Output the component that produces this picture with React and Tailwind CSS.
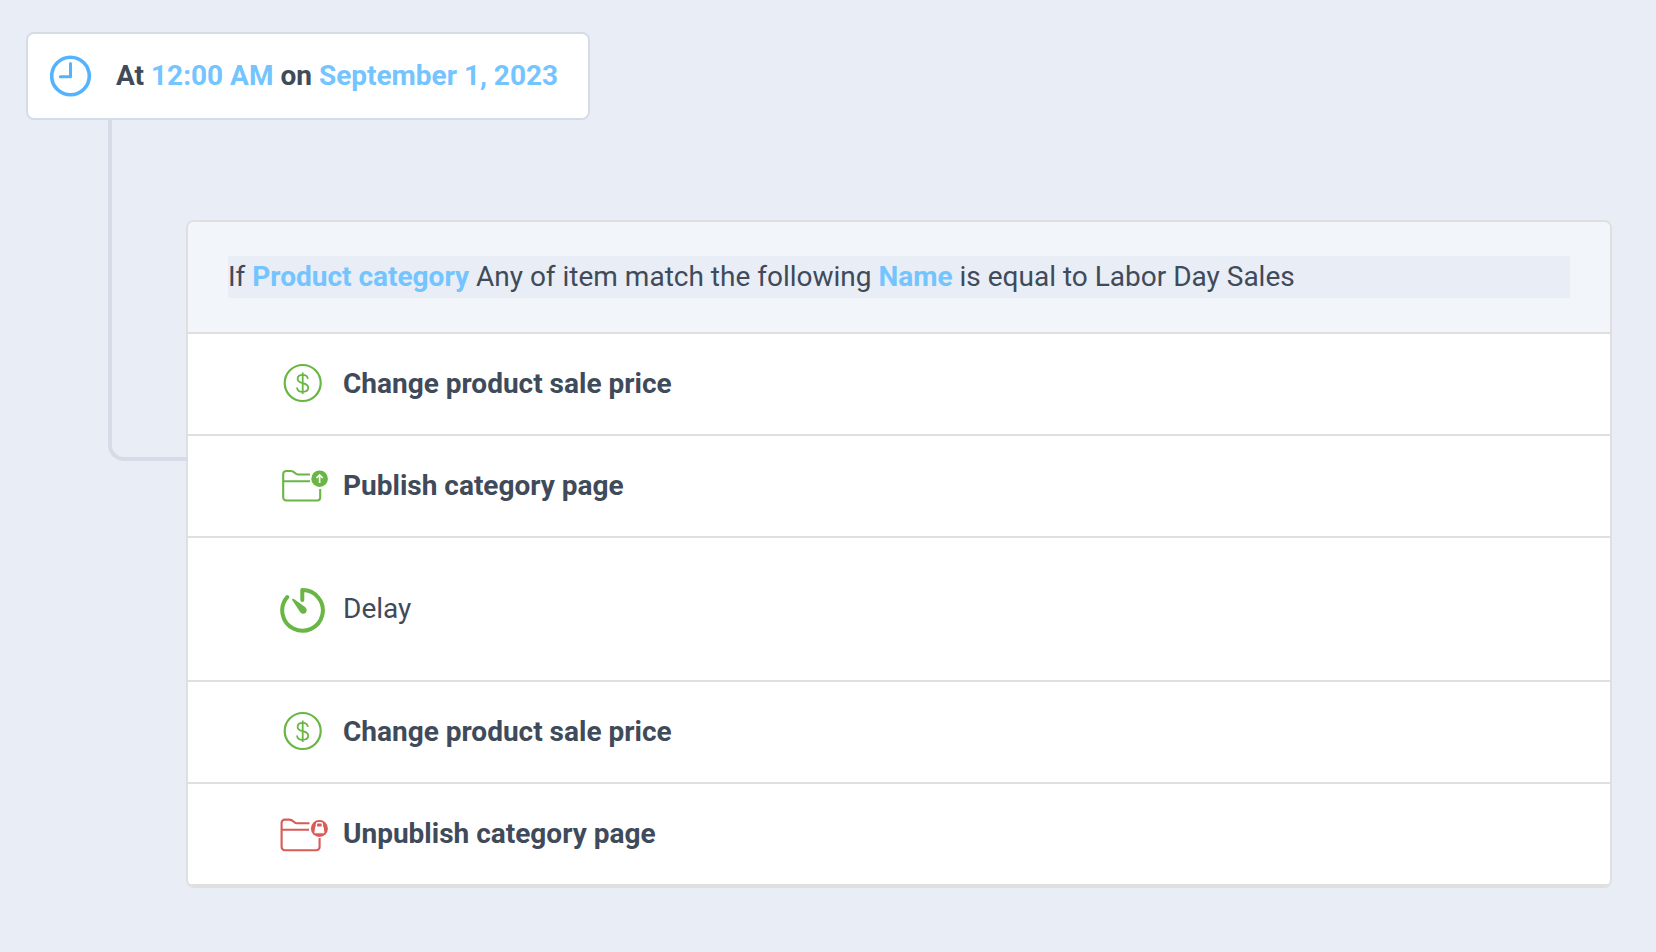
const actions = [
  { id: 1, label: 'Change product sale price', icon: DollarIcon },
  { id: 2, label: 'Publish category page', icon: PublishIcon },
  { id: 3, label: 'Delay', icon: DelayIcon, isDelay: true },
  { id: 4, label: 'Change product sale price', icon: DollarIcon },
  { id: 5, label: 'Unpublish category page', icon: UnpublishIcon },
];

function ClockIcon() {
  return (
    <svg className="size-[42px] shrink-0" viewBox="0 0 42 42" fill="none" stroke="#54b3ff" aria-hidden="true">
      <circle cx="20.5" cy="21" r="18.8" strokeWidth="3.6" />
      <path d="M20.5 8.5V21.8H10.3" strokeWidth="3" strokeLinecap="round" strokeLinejoin="round" />
    </svg>
  );
}

function DollarIcon() {
  return (
    <svg className="size-12 shrink-0" viewBox="0 0 48 48" fill="none" stroke="#69b645" aria-hidden="true">
      <circle cx="22.7" cy="23" r="18" strokeWidth="2.2" />
      <path
        d="M27.9 18.9c-.3-2.500-2.300-4-5.200-4-3.100 0-5.100 1.600-5.100 4 0 2.500 1.900 3.400 5.100 4.200 3.500.8 5.500 1.800 5.500 4.500 0 2.600-2.200 4.300-5.500 4.300-3.400 0-5.500-1.600-5.700-4.400M22.700 12.500v21.500"
        strokeWidth="1.8"
      />
    </svg>
  );
}

function PublishIcon() {
  return (
    <svg className="size-12 shrink-0" viewBox="0 0 48 48" fill="none" stroke="#69b645" aria-hidden="true">
      <path
        d="M30 12.5H17.8c-2.600 0-3.200-3.500-6.800-3.500H6.3A3 3 0 0 0 3.200 12v23.500a3 3 0 0 0 3 3h31a3 3 0 0 0 3-3V27M3.200 19.200H30"
        strokeWidth="2.1"
      />
      <circle cx="39.6" cy="16.7" r="8.3" fill="#69b645" stroke="none" />
      <path d="M39.6 21v-7.800M36.500 16l3.100-3.100 3.100 3.100" stroke="white" strokeWidth="1.7" />
    </svg>
  );
}

function DelayIcon() {
  return (
    <svg className="size-12 shrink-0" viewBox="0 0 48 48" fill="none" aria-hidden="true">
      <path
        d="M22.3 15V5.100A20.300 20.300 0 1 1 7.200 12.100"
        stroke="#69b645"
        strokeWidth="4"
        strokeLinecap="round"
        strokeLinejoin="round"
      />
      <path
        d="M12.3 15.200c-.7-.9.3-2 1.300-1.400l11.500 8.300c2.100 1.800 2 4.200.7 5.600-1.600 1.600-4.300 1.300-5.700-.8z"
        fill="#69b645"
      />
    </svg>
  );
}

function UnpublishIcon() {
  return (
    <svg className="size-12 shrink-0" viewBox="0 0 48 48" fill="none" stroke="#d95b56" aria-hidden="true">
      <path
        d="M29.500 13.300H16.500c-2.800 0-3.400-3.700-7-3.700H4.800A3.100 3.100 0 0 0 1.600 12.700v24.400a3.200 3.200 0 0 0 3.200 3.200h31.600a3.200 3.200 0 0 0 3.200-3.200V28M1.600 19.800H29"
        strokeWidth="2.1"
      />
      <circle cx="39.4" cy="18.4" r="8.500" fill="#d95b56" stroke="none" />
      <path d="M36.400 17.500v-3.300a1.500 1.500 0 0 1 1.500-1.500h3a1.500 1.500 0 0 1 1.500 1.500v3.300" stroke="white" strokeWidth="1.400" />
      <path d="M35.700 17h7.400l.9 5.800h-9.200z" fill="white" stroke="white" strokeWidth="1" strokeLinejoin="round" />
    </svg>
  );
}

function Trigger() {
  return (
    <div className="flex w-fit items-center gap-6 rounded-lg border-2 border-[#d5dce7] bg-white py-[21px] pr-[30px] pl-[22px]">
      <ClockIcon />
      <p className="text-[28px] leading-[42px] font-bold">
        At <span className="text-[#73c4ff]">12:00 AM</span> on{' '}
        <span className="text-[#73c4ff]">September 1, 2023</span>
      </p>
    </div>
  );
}

function Condition() {
  return (
    <div className="border-b-2 border-[#dfdfdf] bg-[#f2f5fa] px-10 py-[34px]">
      <p className="bg-[#e9edf5] text-[28px] leading-[42px]">
        If <strong className="font-bold text-[#73c4ff]">Product category</strong> Any of item match the following{' '}
        <strong className="font-bold text-[#73c4ff]">Name</strong> is equal to Labor Day Sales
      </p>
    </div>
  );
}

export default function App() {
  return (
    <main className="min-h-screen bg-[#e9edf5] py-8 pr-11 pl-[26px] font-[Roboto,sans-serif] text-[#3f4a5a]">
      <Trigger />
      <div className="flex items-start">
        {/* connector from the trigger to its actions */}
        <div className="relative -mr-0.5 ml-[82px] h-[341px] w-20 shrink-0 rounded-bl-2xl border-b-4 border-l-4 border-[#d6dbe7]"></div>
        <section className="mt-[100px] min-w-0 flex-1 overflow-hidden rounded-lg border-2 border-[#dfdfdf] bg-white">
          <Condition />
          <ul>
            {actions.map(({ id, label, icon: Icon, isDelay }) => (
              <li
                key={id}
                className={`flex items-center gap-[15px] border-b-2 border-[#dfdfdf] pl-[92px] text-[28px] leading-[42px] ${
                  isDelay ? 'py-[47px]' : 'py-[26px] font-bold'
                }`}
              >
                <Icon />
                <span>{label}</span>
              </li>
            ))}
          </ul>
        </section>
      </div>
    </main>
  );
}
